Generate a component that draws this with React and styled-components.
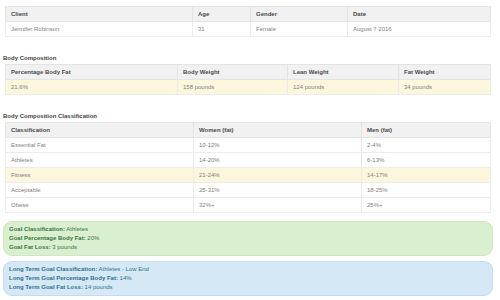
import React from 'react';
import styled, { createGlobalStyle } from 'styled-components';

const GlobalStyle = createGlobalStyle`
  html, body {
    margin: 0;
    padding: 0;
    background: #fff;
  }
  body {
    font-family: "Liberation Sans", Arial, sans-serif;
    font-size: 6px;
    color: #808080;
  }
`;

const Page = styled.div`
  width: 500px;
  height: 300px;
  padding: 6px 7px 0 3px;
  box-sizing: border-box;
  display: flex;
  flex-direction: column;
`;

const Section = styled.div`
  margin-bottom: ${p => p.gap || 0}px;
`;

const Label = styled.div`
  font-weight: bold;
  color: #444;
  height: 8px;
  line-height: 8px;
  margin-bottom: 2px;
`;

const Table = styled.table`
  width: 485px;
  margin-left: 2px;
  border-collapse: collapse;
  table-layout: fixed;
`;

const Th = styled.th`
  background: #f1f1f1;
  color: #4a4a4a;
  font-weight: bold;
  text-align: left;
  height: 14px;
  line-height: 14px;
  padding: 0 5px;
  border: 1px solid #e4e4e4;
`;

const Td = styled.td`
  height: 14px;
  line-height: 14px;
  padding: 0 5px;
  border: 1px solid #ececec;
  background: ${p => (p.warn ? '#fcf6dc' : '#fff')};
`;

const Alert = styled.div`
  width: 490px;
  height: 35px;
  box-sizing: border-box;
  border-radius: 9px;
  padding: 0 5px;
  display: flex;
  flex-direction: column;
  justify-content: center;
  line-height: 9px;
  margin-bottom: ${p => p.gap || 0}px;
  background: ${p => (p.kind === 'info' ? '#d4e8f6' : '#d9efcf')};
  border: 1px solid ${p => (p.kind === 'info' ? '#c2ddf0' : '#cfe7c3')};
  color: ${p => (p.kind === 'info' ? '#31708f' : '#3c763d')};
  b {
    font-weight: bold;
  }
`;

const client = ['Jennifer Robinson', '31', 'Female', 'August 7 2016'];
const composition = ['21.6%', '158 pounds', '124 pounds', '34 pounds'];
const classes = [
  ['Essential Fat', '10-12%', '2-4%'],
  ['Athletes', '14-20%', '6-13%'],
  ['Fitness', '21-24%', '14-17%', true],
  ['Acceptable', '25-31%', '18-25%'],
  ['Obese', '32%+', '25%+'],
];

function Cols({ widths }) {
  return (
    <colgroup>
      {widths.map((w, i) => <col key={i} style={{ width: w }} />)}
    </colgroup>
  );
}

export default function App() {
  return (
    <Page>
      <GlobalStyle />
      <Section gap={17}>
        <Table>
          <Cols widths={[187, 58, 97, 143]} />
          <thead>
            <tr>
              <Th>Client</Th><Th>Age</Th><Th>Gender</Th><Th>Date</Th>
            </tr>
          </thead>
          <tbody>
            <tr>{client.map(c => <Td key={c}>{c}</Td>)}</tr>
          </tbody>
        </Table>
      </Section>

      <Section gap={17}>
        <Label>Body Composition</Label>
        <Table>
          <Cols widths={[172, 110, 111, 92]} />
          <thead>
            <tr>
              <Th>Percentage Body Fat</Th><Th>Body Weight</Th><Th>Lean Weight</Th><Th>Fat Weight</Th>
            </tr>
          </thead>
          <tbody>
            <tr>{composition.map(c => <Td warn key={c}>{c}</Td>)}</tr>
          </tbody>
        </Table>
      </Section>

      <Section gap={8}>
        <Label>Body Composition Classification</Label>
        <Table>
          <Cols widths={[188, 168, 129]} />
          <thead>
            <tr>
              <Th>Classification</Th><Th>Women (fat)</Th><Th>Men (fat)</Th>
            </tr>
          </thead>
          <tbody>
            {classes.map(([name, w, m, warn]) => (
              <tr key={name}>
                <Td warn={warn}>{name}</Td>
                <Td warn={warn}>{w}</Td>
                <Td warn={warn}>{m}</Td>
              </tr>
            ))}
          </tbody>
        </Table>
      </Section>

      <Alert gap={5}>
        <div><b>Goal Classification:</b> Athletes</div>
        <div><b>Goal Percentage Body Fat:</b> 20%</div>
        <div><b>Goal Fat Loss:</b> 3 pounds</div>
      </Alert>
      <Alert kind="info">
        <div><b>Long Term Goal Classification:</b> Athletes - Low End</div>
        <div><b>Long Term Goal Percentage Body Fat:</b> 14%</div>
        <div><b>Long Term Goal Fat Loss:</b> 14 pounds</div>
      </Alert>
    </Page>
  );
}
